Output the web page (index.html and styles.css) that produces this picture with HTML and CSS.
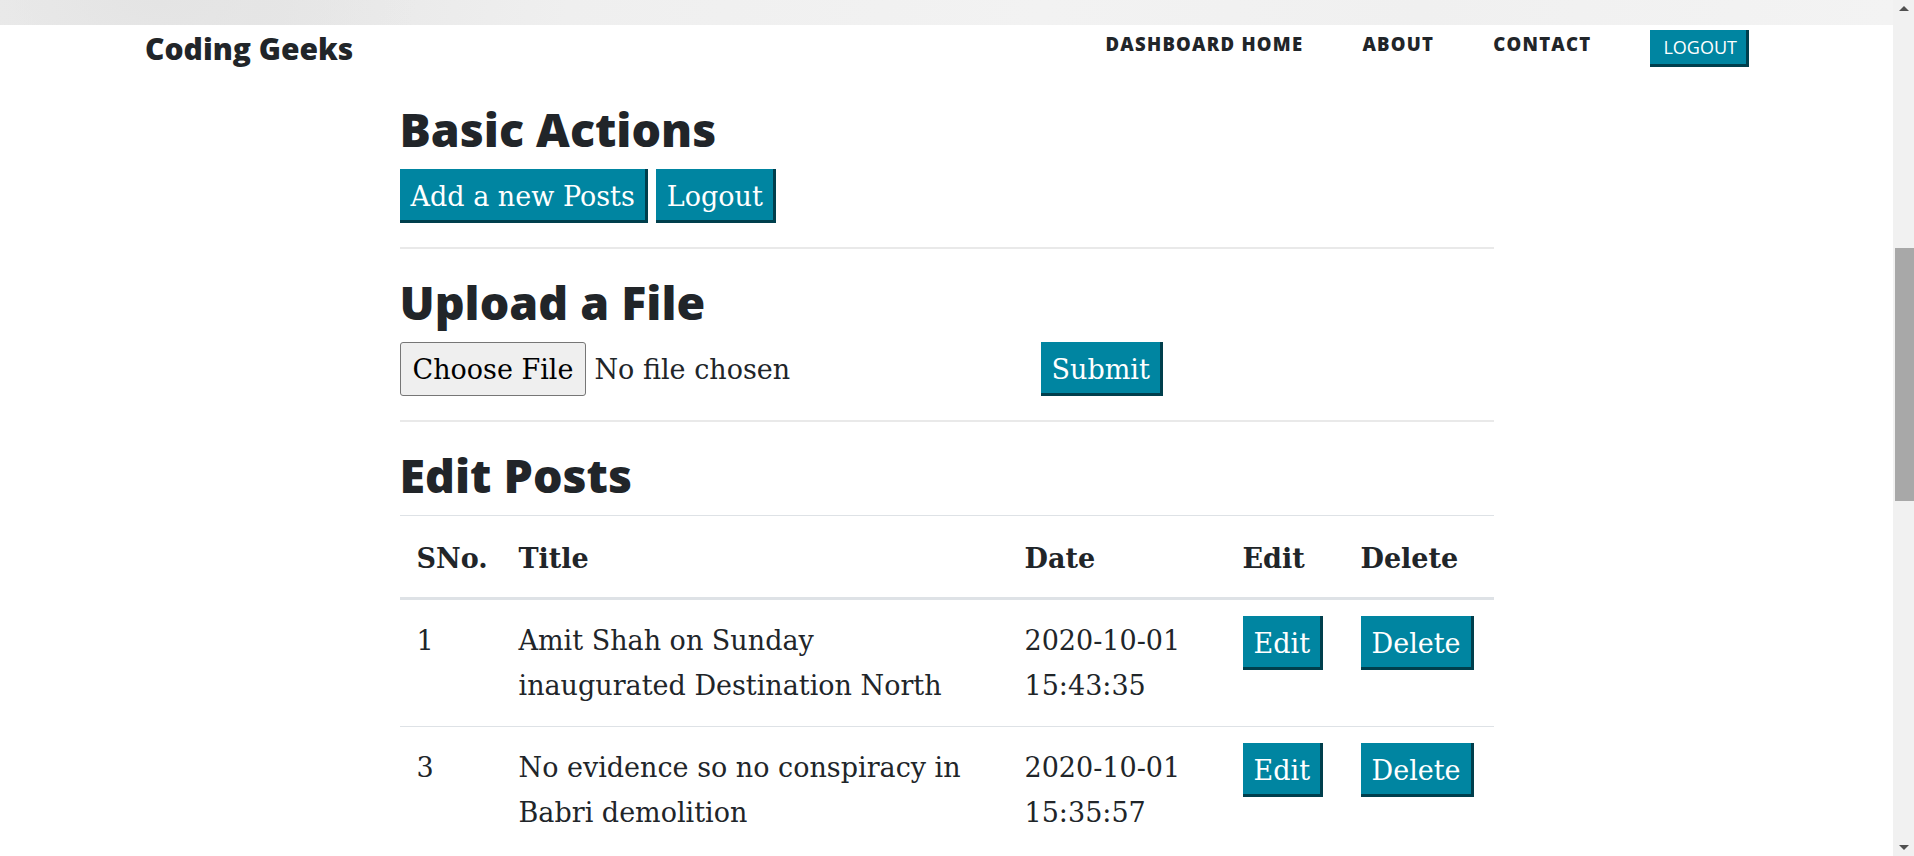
FILE: index.html
```html
<!DOCTYPE html>
<html lang="en">
<head>
<meta charset="utf-8">
<title>Coding Geeks - Dashboard</title>
<link rel="stylesheet" href="styles.css">
</head>
<body>
<div class="page">
  <div class="masthead"></div>
  <nav class="navbar">
    <a class="brand" href="#">Coding Geeks</a>
    <ul class="nav-links">
      <li><a href="#">Dashboard Home</a></li>
      <li><a href="#">About</a></li>
      <li><a href="#">Contact</a></li>
      <li><a class="nav-logout" href="#">LOGOUT</a></li>
    </ul>
  </nav>
  <main class="container">
    <h2>Basic Actions</h2>
    <div class="actions">
      <a class="btn" href="#">Add a new Posts</a>
      <a class="btn" href="#">Logout</a>
    </div>
    <hr>
    <h2>Upload a File</h2>
    <form class="upload">
      <div class="file-field">
        <label class="file-btn" for="file1">Choose File</label>
        <input id="file1" class="file-input" type="file">
        <span class="file-name">No file chosen</span>
      </div>
      <button class="btn" type="button">Submit</button>
    </form>
    <hr>
    <h2>Edit Posts</h2>
    <table class="posts">
      <colgroup>
        <col class="c-sno"><col class="c-title"><col class="c-date"><col class="c-edit"><col class="c-del">
      </colgroup>
      <thead>
        <tr><th>SNo.</th><th>Title</th><th>Date</th><th>Edit</th><th>Delete</th></tr>
      </thead>
      <tbody>
        <tr>
          <td>1</td>
          <td class="title-cell">Amit Shah on Sunday inaugurated Destination North</td>
          <td>2020-10-01 15:43:35</td>
          <td><a class="btn btn-cell" href="#">Edit</a></td>
          <td><a class="btn btn-cell" href="#">Delete</a></td>
        </tr>
        <tr>
          <td>3</td>
          <td class="title-cell">No evidence so no conspiracy in Babri demolition</td>
          <td>2020-10-01 15:35:57</td>
          <td><a class="btn btn-cell" href="#">Edit</a></td>
          <td><a class="btn btn-cell" href="#">Delete</a></td>
        </tr>
      </tbody>
    </table>
  </main>
</div>
<div class="scrollbar">
  <span class="arrow arrow-up"></span>
  <span class="thumb"></span>
  <span class="arrow arrow-down"></span>
</div>
</body>
</html>
```

FILE: styles.css
```css
html, body {
  margin: 0;
  padding: 0;
  height: 100%;
  overflow: hidden;
  background: #fff;
}

body {
  font-family: "DejaVu Serif", "Liberation Serif", serif;
  font-size: 27px;
  line-height: 45px;
  color: #212529;
}

.page {
  width: 1893px;
}

.masthead {
  height: 25px;
  background:
    radial-gradient(ellipse 260px 120px at 160px 0px, #e4e4e4 0%, rgba(228,228,228,0) 100%),
    linear-gradient(100deg, #ececec 0%, #e7e7e7 14%, #efefef 30%, #f2f2f2 55%, #f0f0f0 75%, #f3f3f3 100%);
}

/* ---------- navbar ---------- */
.navbar {
  display: flex;
  align-items: flex-start;
  height: 76px;
  padding: 0 144px 0 145px;
  box-sizing: border-box;
}

.brand {
  margin-top: 3px;
  font-family: "Open Sans", "Liberation Sans", sans-serif;
  font-weight: 800;
  font-size: 30px;
  line-height: 41px;
  color: #212529;
  text-decoration: none;
}

.nav-links {
  display: flex;
  align-items: flex-start;
  gap: 59px;
  margin: 0 0 0 auto;
  padding: 0;
  list-style: none;
}

.nav-links a {
  display: block;
  margin-top: 6px;
  font-family: "Open Sans", "Liberation Sans", sans-serif;
  font-weight: 800;
  font-size: 18.5px;
  line-height: 25px;
  letter-spacing: 1.25px;
  text-transform: uppercase;
  color: #212529;
  text-decoration: none;
}

.nav-links a.nav-logout {
  margin-top: 5px;
  padding: 5px 9px 4px 13px;
  font-weight: 400;
  font-size: 18px;
  letter-spacing: 0;
  color: #fff;
  background: #0085a1;
  border-right: 3px solid #003f4d;
  border-bottom: 3px solid #003f4d;
}

/* ---------- content ---------- */
.container {
  width: 1094px;
  margin: 0 auto;
}

h2 {
  margin: 0 0 12px;
  font-family: "Open Sans", "Liberation Sans", sans-serif;
  font-weight: 800;
  font-size: 46.5px;
  line-height: 56px;
  color: #212529;
}

hr {
  margin: 24px 0 25px;
  border: 0;
  border-top: 2px solid #e9e9e9;
}

.actions {
  display: flex;
  gap: 8px;
}

.btn {
  display: inline-block;
  padding: 5px 10px 1px 11px;
  font-family: "DejaVu Serif", "Liberation Serif", serif;
  font-size: 27px;
  line-height: 45px;
  color: #fff;
  background: #0085a1;
  border: 0;
  border-right: 3px solid #003f4d;
  border-bottom: 3px solid #003f4d;
  text-decoration: none;
  cursor: pointer;
}

/* ---------- upload ---------- */
.upload {
  display: flex;
  align-items: center;
  margin: 0;
}

.file-field {
  display: flex;
  align-items: center;
  width: 641px;
}

.file-btn {
  padding: 4px 12px 3px;
  font-size: 27px;
  line-height: 45px;
  color: #000;
  background: #efefef;
  border: 1px solid #767676;
  border-radius: 3px;
  cursor: pointer;
}

.file-input {
  display: none;
}

.file-name {
  margin-left: 8px;
  color: #212529;
}

/* ---------- table ---------- */
.posts {
  width: 100%;
  border-collapse: collapse;
  table-layout: fixed;
}

.c-sno { width: 102px; }
.c-title { width: 506px; }
.c-date { width: 218px; }
.c-edit { width: 118px; }
.c-del { width: 150px; }

.posts th,
.posts td {
  padding: 18px 17px;
  text-align: left;
  vertical-align: top;
  border-top: 1px solid #dee2e6;
}

.posts td.title-cell {
  padding-right: 32px;
}

.posts th {
  padding: 20px 17px 16px;
  font-weight: 700;
  border-bottom: 3px solid #dee2e6;
}

.btn-cell {
  vertical-align: top;
  margin-top: -2px;
}

/* ---------- fake scrollbar ---------- */
.scrollbar {
  position: fixed;
  top: 0;
  right: 0;
  width: 21px;
  height: 100%;
  background: #f1f1f1;
}

.thumb {
  position: absolute;
  top: 248px;
  left: 2px;
  right: 0;
  height: 253px;
  background: #a8a8a8;
}

.arrow {
  position: absolute;
  left: 6px;
  width: 0;
  height: 0;
  border-left: 5px solid transparent;
  border-right: 5px solid transparent;
}

.arrow-up {
  top: 6px;
  border-bottom: 5px solid #505050;
}

.arrow-down {
  bottom: 6px;
  border-top: 5px solid #505050;
}
```
